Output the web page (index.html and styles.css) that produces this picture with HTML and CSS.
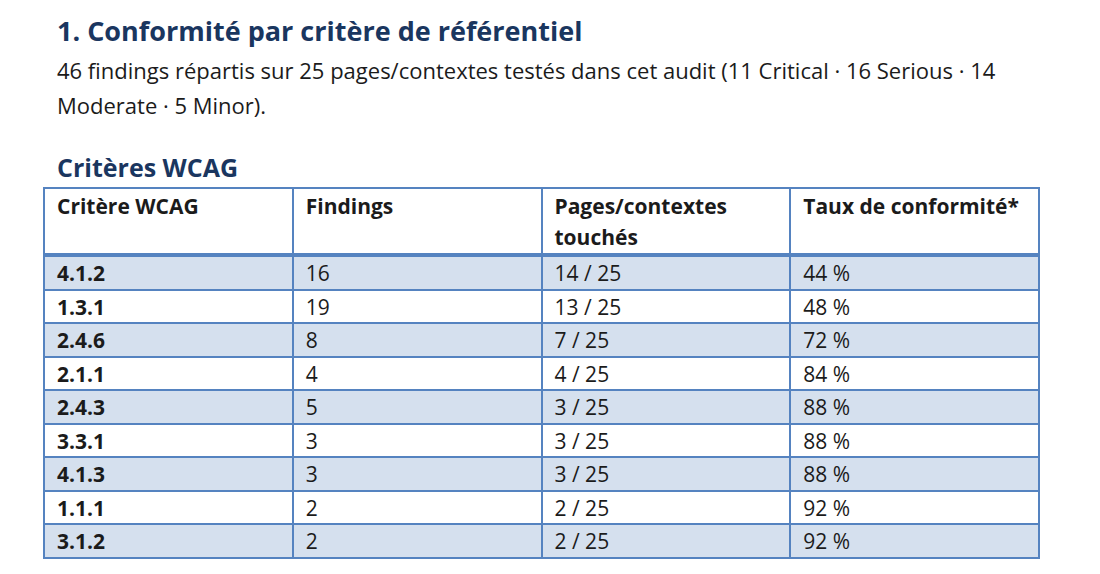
FILE: index.html
```html
<!DOCTYPE html>
<html lang="fr">
<head>
<meta charset="utf-8">
<title>Conformité par critère de référentiel</title>
<link rel="stylesheet" href="styles.css">
</head>
<body>
<main class="page">
  <h1 class="title">1. Conformité par critère de référentiel</h1>
  <p class="intro">46 findings répartis sur 25 pages/contextes testés dans cet audit (11 Critical · 16 Serious · 14 Moderate · 5 Minor).</p>
  <h2 class="subtitle">Critères WCAG</h2>
  <table class="grid">
    <thead>
      <tr>
        <th>Critère WCAG</th>
        <th>Findings</th>
        <th>Pages/contextes touchés</th>
        <th>Taux de conformité*</th>
      </tr>
    </thead>
    <tbody>
      <tr class="band"><td class="crit">4.1.2</td><td>16</td><td>14 / 25</td><td>44 %</td></tr>
      <tr><td class="crit">1.3.1</td><td>19</td><td>13 / 25</td><td>48 %</td></tr>
      <tr class="band"><td class="crit">2.4.6</td><td>8</td><td>7 / 25</td><td>72 %</td></tr>
      <tr><td class="crit">2.1.1</td><td>4</td><td>4 / 25</td><td>84 %</td></tr>
      <tr class="band"><td class="crit">2.4.3</td><td>5</td><td>3 / 25</td><td>88 %</td></tr>
      <tr><td class="crit">3.3.1</td><td>3</td><td>3 / 25</td><td>88 %</td></tr>
      <tr class="band"><td class="crit">4.1.3</td><td>3</td><td>3 / 25</td><td>88 %</td></tr>
      <tr><td class="crit">1.1.1</td><td>2</td><td>2 / 25</td><td>92 %</td></tr>
      <tr class="band"><td class="crit">3.1.2</td><td>2</td><td>2 / 25</td><td>92 %</td></tr>
    </tbody>
  </table>
</main>
</body>
</html>
```

FILE: styles.css
```css
html, body {
  margin: 0;
  padding: 0;
  background: #ffffff;
}

body {
  font-family: "Open Sans", "Lato", "Liberation Sans", sans-serif;
  color: #1b1b1b;
}

.page {
  padding: 12px 0 0 43px;
  width: 997px;
}

.title {
  margin: 0;
  padding-left: 14px;
  font-size: 27px;
  line-height: 38px;
  font-weight: 700;
  color: #1a365f;
}

.intro {
  margin: 3px 0 0;
  padding-left: 14px;
  font-size: 22px;
  line-height: 35px;
}

.subtitle {
  margin: 27px 0 3px;
  padding-left: 14px;
  font-size: 25px;
  line-height: 34px;
  font-weight: 700;
  color: #1a365f;
}

.grid {
  width: 997px;
  border-collapse: collapse;
  table-layout: fixed;
  font-size: 21px;
}

.grid th,
.grid td {
  border: 2px solid #5583c0;
  text-align: left;
  vertical-align: top;
  padding: 3px 12px 1px 12px;
  line-height: 27.5px;
}

.grid th {
  font-weight: 700;
  padding-top: 2px;
  padding-bottom: 0;
  line-height: 31px;
  border-bottom-width: 4px;
}

.grid td.crit {
  font-weight: 700;
}

.grid tr.band td {
  background: #d5e0ee;
}
```
